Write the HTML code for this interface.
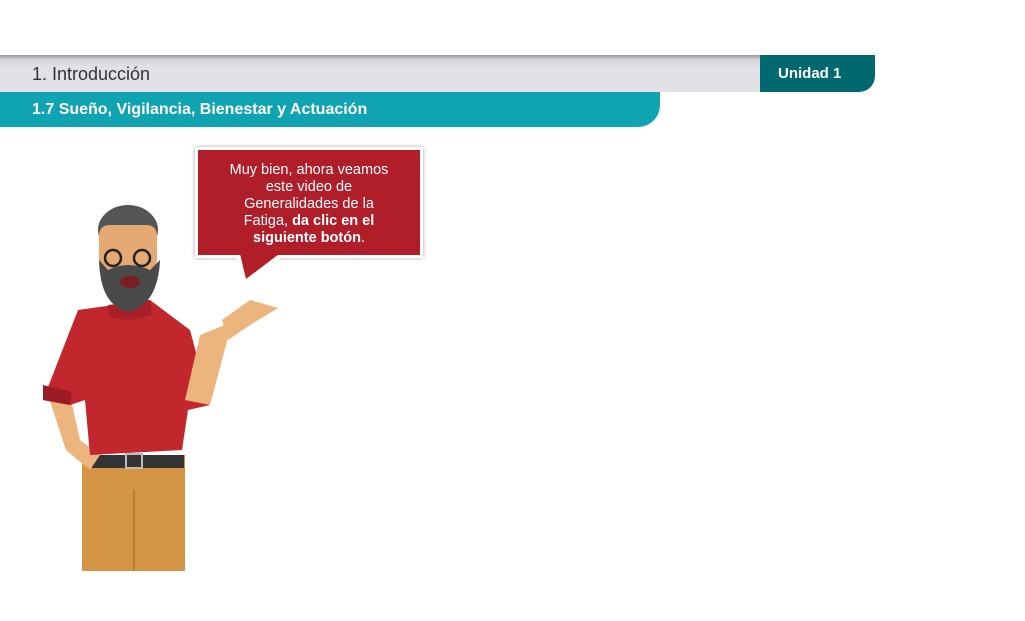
<!DOCTYPE html>
<html><head><meta charset="utf-8"><style>
body{margin:0;width:1025px;height:621px;background:#fff;position:relative;overflow:hidden;font-family:"Liberation Sans",sans-serif}
.gray{position:absolute;left:0;top:55px;width:760px;height:37px;background:linear-gradient(#9a9a9c 0,#d6d5d9 5px,#e2e1e5 12px,#e2e1e5)}
.gray span{position:absolute;left:32px;top:9px;font-size:18px;color:#333}
.tab{position:absolute;left:760px;top:55px;width:115px;height:37px;background:#00696f;border-radius:0 0 16px 0}
.tab span{position:absolute;left:18px;top:10px;font-size:15px;color:#fff;font-weight:bold}
.teal{position:absolute;left:0;top:92px;width:660px;height:35px;background:#10a4b3;border-radius:0 0 22px 0}
.teal span{position:absolute;left:32px;top:9px;font-size:16px;color:#fff;font-weight:bold}
.bub{position:absolute;left:195px;top:147px;width:222px;height:93px;background:#b01e2a;border:3px solid #fff;box-shadow:0 0 4px rgba(0,0,0,.35);color:#fff;font-size:14.5px;line-height:17px;text-align:center;padding-top:12px;box-sizing:content-box}
</style></head><body>
<div class="gray"><span>1. Introducción</span></div>
<div class="tab"><span>Unidad 1</span></div>
<div class="teal"><span>1.7 Sueño, Vigilancia, Bienestar y Actuación</span></div>
<svg style="position:absolute;left:0;top:0" width="1025" height="621">
<!-- pants -->
<rect x="82" y="455" width="103" height="116" fill="#d39544"/>
<line x1="134" y1="490" x2="134" y2="571" stroke="#b97e35" stroke-width="2"/>
<rect x="92" y="455" width="92" height="13" fill="#333"/>
<rect x="126" y="454" width="16" height="14" fill="none" stroke="#bbb" stroke-width="2"/>
<path d="M48,395 L66,450 L90,470 L100,455 L80,440 L70,395Z" fill="#ebb57d"/>
<path d="M78,310 L150,300 L190,330 L210,405 L188,410 L182,450 L90,455 L85,400 L70,405 L43,400 Z" fill="#c1272d"/>
<path d="M43,385 L72,392 L70,405 L43,400Z" fill="#9b1c24"/>
<path d="M185,400 L210,405 L230,330 L225,325 L200,335 Z" fill="#ebb57d"/>
<path d="M222,320 L250,300 L278,308 L250,325 L228,340Z" fill="#ebb57d"/>
<path d="M108,305 L150,300 L152,315 L130,320 L110,318Z" fill="#a91f27"/>
<ellipse cx="128" cy="230" rx="30" ry="25" fill="#555"/>
<rect x="99" y="225" width="58" height="45" rx="10" fill="#e5a974"/>
<path d="M99,260 Q100,305 128,312 Q158,305 160,260 L150,270 Q128,260 108,270Z" fill="#4a4a4a"/>
<ellipse cx="130" cy="282" rx="10" ry="6" fill="#7a2020"/>
<circle cx="113" cy="258" r="8" fill="none" stroke="#222" stroke-width="2.5"/>
<circle cx="142" cy="258" r="8" fill="none" stroke="#222" stroke-width="2.5"/>
</svg>
<div class="bub">Muy bien, ahora veamos<br>este video de<br>Generalidades de la<br>Fatiga, <b>da clic en el<br>siguiente botón</b>.</div>
<svg style="position:absolute;left:0;top:0" width="1025" height="621">
<polygon points="236,256 284,256 243,285" fill="#fff"/>
<polygon points="240,254 279,254 246,279" fill="#b01e2a"/>
</svg>
</body></html>
